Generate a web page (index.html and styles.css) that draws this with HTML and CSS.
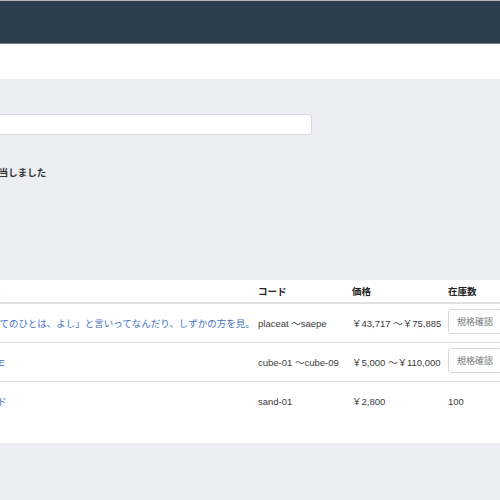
FILE: index.html
```html
<!DOCTYPE html>
<html lang="ja">
<head>
<meta charset="utf-8">
<title>商品一覧</title>
<link rel="stylesheet" href="styles.css">
</head>
<body>
<header class="topbar"></header>
<nav class="subbar"></nav>
<main class="main">
  <div class="inner">
    <form class="search">
      <input class="search-input" type="text">
    </form>
    <p class="result">3件が該当しました</p>
  </div>
  <section class="panel">
    <table class="list">
      <colgroup>
        <col class="c-name"><col class="c-code"><col class="c-price"><col class="c-stock">
      </colgroup>
      <thead>
        <tr><th>商品名</th><th>コード</th><th>価格</th><th>在庫数</th></tr>
      </thead>
      <tbody>
        <tr>
          <td><a class="name" href="#">「すべてのひとは、よし」と言いってなんだり、しずかの方を見。</a></td>
          <td>placeat 〜saepe</td>
          <td>￥43,717 〜￥75,885</td>
          <td><button class="btn" type="button">規格確認</button></td>
        </tr>
        <tr>
          <td><a class="name" href="#">XCUBE</a></td>
          <td>cube-01 〜cube-09</td>
          <td>￥5,000 〜￥110,000</td>
          <td><button class="btn" type="button">規格確認</button></td>
        </tr>
        <tr>
          <td><a class="name" href="#">Sサンド</a></td>
          <td>sand-01</td>
          <td>￥2,800</td>
          <td>100</td>
        </tr>
      </tbody>
    </table>
  </section>
</main>
</body>
</html>
```
FILE: styles.css
```css
html, body {
  margin: 0;
  padding: 0;
  background: #edeef2;
  overflow: hidden;
}
body {
  font-family: "Liberation Sans", "Noto Sans CJK JP", sans-serif;
  font-size: 9.5px;
  color: #3a3a3a;
}
.topbar {
  height: 42px;
  background: #2f3e4e;
  border-top: 1px solid #b3b5b8;
  border-bottom: 1px solid #717b86;
}
.subbar {
  height: 35px;
  background: #ffffff;
}
.main {
  background: #edeef2;
  min-height: 440px;
  overflow: hidden;
}
.inner {
  margin-left: -35px;
  padding-top: 35px;
}
.search {
  margin: 0;
}
.search-input {
  display: block;
  box-sizing: border-box;
  width: 347px;
  height: 21px;
  margin: 0;
  border: 1px solid #d6d9de;
  border-radius: 3px;
  background: #ffffff;
  padding: 0 6px;
}
.result {
  margin: 31px 0 0;
  line-height: 14px;
  font-weight: bold;
  color: #333;
}
.panel {
  margin-top: 100px;
  background: #ffffff;
  padding-bottom: 23px;
}
.list {
  margin-left: -33px;
  width: 571px;
  table-layout: fixed;
  border-collapse: separate;
  border-spacing: 0;
}
.c-name { width: 286px; }
.c-code { width: 94px; }
.c-price { width: 96px; }
.c-stock { width: 95px; }
.list th {
  height: 22px;
  padding: 0 5px;
  text-align: left;
  vertical-align: middle;
  font-weight: bold;
  color: #222;
  white-space: nowrap;
  border-bottom: 2px solid #dfe1e4;
}
.list td {
  height: 38px;
  padding: 0 5px;
  vertical-align: middle;
  white-space: nowrap;
  border-bottom: 1px solid #dcdee1;
}
.list tbody tr:last-child td {
  border-bottom: none;
}
.name {
  color: #3f74c2;
  text-decoration: none;
}
.btn {
  height: 25px;
  margin: 0 0 4px;
  padding: 0 8px;
  border: 1px solid #d8d9dc;
  border-radius: 3px;
  background: #ffffff;
  font-family: "Noto Sans CJK JP", sans-serif;
  font-size: 9px;
  color: #777;
  white-space: nowrap;
}
```
